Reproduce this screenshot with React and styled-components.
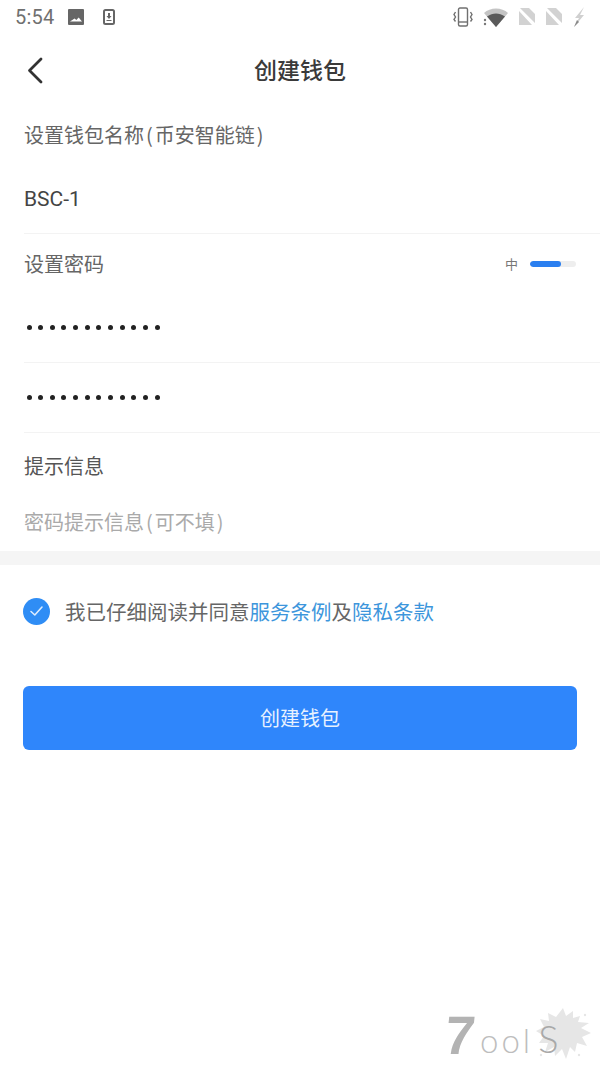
import React from "react";
import styled, { createGlobalStyle } from "styled-components";

const Global = createGlobalStyle`
  html, body { margin: 0; padding: 0; background: #fff; }
  body { font-family: "Noto Sans CJK SC", "Noto Sans", sans-serif; }
  * { box-sizing: border-box; }
`;
const Page = styled.div`position: relative; width: 600px; height: 1067px; overflow: hidden; background: #fff;`;
const StatusBar = styled.div`height: 34px; display: flex; align-items: center; justify-content: space-between; padding: 0 15px;`;
const StatusGroup = styled.div`display: flex; align-items: center; gap: ${p => p.$gap}px;`;
const Time = styled.span`font: 20px/1 Roboto, sans-serif; color: #707070; letter-spacing: .2px;`;
const NavBar = styled.header`position: relative; height: 72px; display: flex; align-items: center; justify-content: center;`;
const BackButton = styled.button`position: absolute; left: 24px; top: 21px; width: 22px; height: 30px; padding: 0; border: 0; background: none; display: flex;`;
const Title = styled.h1`margin: -2px 0 0; font-size: 23px; font-weight: 500; color: #3a3a3a; line-height: 30px;`;
const Form = styled.section`padding-left: 24px;`;
const Row = styled.div`
  height: ${p => p.$h}px; display: flex; align-items: center; justify-content: space-between;
  padding-right: 24px; padding-bottom: ${p => p.$pb || 0}px;
  ${p => p.$line && "border-bottom: 1px solid #f3f3f3;"}
`;
const Label = styled.span`font-size: 20px; line-height: 28px; color: ${p => p.$color || "#666"};`;
const Paren = styled.span`padding: 0 2px;`;
const Value = styled.span`font: 21px/28px Roboto, sans-serif; color: #444;`;
const Dots = styled.div`display: flex; gap: 6.67px; padding-left: 2.5px;`;
const Dot = styled.i`display: block; width: 5px; height: 5px; border-radius: 50%; background: #222;`;
const Strength = styled.div`display: flex; align-items: center; gap: 12px;`;
const StrengthText = styled.span`font-size: 13px; line-height: 16px; color: #777;`;
const Track = styled.div`width: 46px; height: 6px; border-radius: 3px; background: #eee; overflow: hidden;`;
const Fill = styled.div`height: 100%; border-radius: 3px; background: #2a7ff0;`;
const Band = styled.div`height: 14px; background: #f5f5f5;`;
const Agree = styled.div`height: 92px; padding-left: 23px; display: flex; align-items: center; gap: 15px;`;
const Check = styled.span`width: 27px; height: 27px; border-radius: 50%; background: #2f8df5; display: flex; align-items: center; justify-content: center;`;
const AgreeText = styled.p`margin: 0; font-size: 20.5px; line-height: 28px; color: #666;`;
const TextLink = styled.a`color: #3d96dc;`;
const Submit = styled.button`
  display: block; margin: 29px 23px 0; width: 554px; height: 64px; border: 0; border-radius: 6px;
  background: #2f86fb; color: #e8f2ff; font: 400 20px/28px "Noto Sans CJK SC", sans-serif;
`;
const Watermark = styled.div`position: absolute; left: 444px; top: 1004px; width: 152px; height: 60px;`;
const Seven = styled.span`position: absolute; left: 1px; top: 3px; font: 700 54px/56px "Liberation Sans", sans-serif; color: #b3b3b3; transform: skewX(-6deg);`;
const Ools = styled.span`position: absolute; left: 36px; top: 14px; font: 300 33px/40px Lato, sans-serif; letter-spacing: 3px; color: #bdbdbd;`;
const BigS = styled.span`margin-left: 5px; font-size: 38px; color: #a9a9a9;`;
const Splash = styled.svg`position: absolute; left: 89px; top: 1px; filter: blur(.6px);`;

const DotRow = () => <Dots>{Array.from({ length: 12 }, (_, i) => <Dot key={i} />)}</Dots>;
const SimIcon = () => <svg width="17" height="18" viewBox="0 0 17 18"><path d="M0 0h10l6 6v9L1 0z M0 3l13 14H0z" fill="#d2d2d2" /></svg>;

export default function App() {
  return (
    <Page>
      <Global />
      <StatusBar>
        <StatusGroup $gap={14}>
          <Time>5:54</Time>
          <svg width="16" height="16" viewBox="0 0 16 16"><path fill="#666" fillRule="evenodd" d="M1 0h14a1 1 0 0 1 1 1v14a1 1 0 0 1-1 1H1a1 1 0 0 1-1-1V1a1 1 0 0 1 1-1zM2 12.500h12l-3.300-4-2.400 2.600-1.700-1.600z" /></svg>
          <svg width="12" height="16" viewBox="0 0 12 16" style={{ marginLeft: 5 }}><rect x="1" y="1" width="10" height="14" rx="1.500" fill="none" stroke="#666" strokeWidth="2" /><path d="M5 4h2v3h1.500L6 10 3.500 7H5z M3.500 11h5v1h-5z" fill="#666" /></svg>
        </StatusGroup>
        <StatusGroup $gap={10}>
          <svg width="20" height="20" viewBox="0 0 20 20" fill="none" stroke="#707070" strokeWidth="1.400"><rect x="5.500" y="1" width="9" height="18" rx="1.500" /><path d="M5.500 15h9" /><path d="M2.500 5 1 7.500 2.500 10 1 12.500l1.500 2M17.500 5 19 7.500 17.500 10l1.500 2.500-1.500 2" /></svg>
          <svg width="26" height="20" viewBox="0 0 26 20"><path d="M1 6C7 0 19 0 25 6l-12 14z" fill="#c4c4c4" /><path d="M4 9.500c6-4 12-4 18 0L13 20z" fill="#5a5a5a" /><circle cx="2" cy="13" r="1.200" fill="#777" /><circle cx="2" cy="17" r="1.200" fill="#777" /></svg>
          <SimIcon />
          <SimIcon />
          <svg width="12" height="20" viewBox="0 0 12 20"><path d="M11 0 2 11h4L1 20l10-12H7z" fill="#d0d0d0" /><path d="M4 13 1 20l5-5z" fill="#8a8a8a" /></svg>
        </StatusGroup>
      </StatusBar>
      <NavBar>
        <BackButton aria-label="返回">
          <svg width="22" height="30" viewBox="0 0 22 30" fill="none"><path d="M17 4 5.500 15.500 17 27" stroke="#333" strokeWidth="2.800" strokeLinecap="round" strokeLinejoin="round" /></svg>
        </BackButton>
        <Title>创建钱包</Title>
      </NavBar>
      <Form>
        <Row $h={58}><Label>设置钱包名称<Paren>(</Paren>币安智能链<Paren>)</Paren></Label></Row>
        <Row $h={70} $line><Value>BSC-1</Value></Row>
        <Row $h={59}>
          <Label>设置密码</Label>
          <Strength><StrengthText>中</StrengthText><Track><Fill style={{ width: "68%" }} /></Track></Strength>
        </Row>
        <Row $h={70} $line><DotRow /></Row>
        <Row $h={70} $line><DotRow /></Row>
        <Row $h={66}><Label $color="#555">提示信息</Label></Row>
        <Row $h={52} $pb={7}><Label $color="#aaa">密码提示信息<Paren>(</Paren>可不填<Paren>)</Paren></Label></Row>
      </Form>
      <Band />
      <Agree>
        <Check>
          <svg width="15" height="12" viewBox="0 0 15 12" fill="none"><path d="M2 6.500 5.800 10 13 2" stroke="#dcecff" strokeWidth="1.600" strokeLinecap="round" strokeLinejoin="round" /></svg>
        </Check>
        <AgreeText>我已仔细阅读并同意<TextLink>服务条例</TextLink>及<TextLink>隐私条款</TextLink></AgreeText>
      </Agree>
      <Submit>创建钱包</Submit>
      <Watermark>
        <Splash width="60" height="56" viewBox="0 0 60 56"><path fill="#e6e6e6" d="M30 3 33 11 40 6 40 13 47 11 45 17 56 18 48 23 58 28 49 32 54 41 44 38 42 47 37 42 33 54 29 44 22 51 21 42 12 47 15 38 6 38 11 31 3 26 11 22 7 14 16 16 15 8 23 12Z" /><circle cx="52" cy="10" r="1.200" fill="#e6e6e6" /><circle cx="8" cy="50" r="1.200" fill="#e6e6e6" /><circle cx="46" cy="50" r="1.200" fill="#e6e6e6" /></Splash>
        <Seven>7</Seven>
        <Ools>ool<BigS>S</BigS></Ools>
      </Watermark>
    </Page>
  );
}
